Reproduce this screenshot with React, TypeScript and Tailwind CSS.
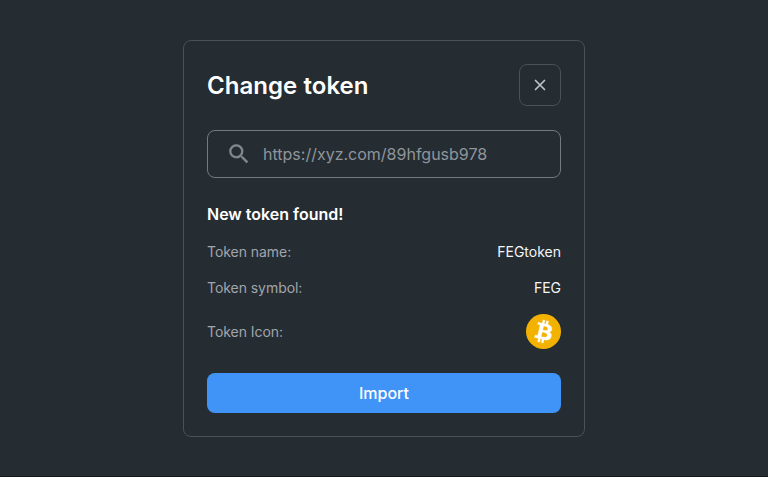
import React from "react";

function Row({ label, value }: { label: string; value: string }) {
  return (
    <div className="flex h-9 items-center justify-between text-[14px]">
      <span className="tracking-[-0.05px] text-[#a0a6ac]">{label}</span>
      <span className="text-[#f4f5f6]">{value}</span>
    </div>
  );
}

export default function App() {
  return (
    <div className="flex h-[477px] w-[768px] items-start justify-center border-b border-[#15191c] bg-[#252c32] pt-10 font-['Inter',sans-serif]">
      <div className="h-[397px] w-[402px] rounded-lg border border-[#4b5156] px-[23px] pt-[23px]">
        <div className="flex h-[42px] items-center justify-between">
          <h1 className="pt-0.5 text-[24px] font-semibold tracking-[0.05px] text-white">Change token</h1>
          <button className="flex size-[42px] items-center justify-center rounded-lg border border-[#4b5156]">
            <svg className="size-[12px]" viewBox="0 0 12 12" stroke="#bfc4c8" strokeWidth="1.7" strokeLinecap="round">
              <path d="M1.5 1.5 10.5 10.5M10.5 1.5 1.5 10.5" />
            </svg>
          </button>
        </div>
        <div className="mt-6 flex h-12 items-center rounded-lg border border-[#737a80] pl-[18px]">
          <svg className="size-[26px]" viewBox="0 0 24 24" fill="#7f8a8f" stroke="#7f8a8f" strokeWidth="0.15">
            <path d="M15.5 14h-.79l-.28-.27A6.471 6.471 0 0 0 16 9.5 6.5 6.5 0 1 0 9.5 16c1.61 0 3.09-.59 4.23-1.57l.27.28v.79l5 4.99L20.49 19l-4.99-5zm-6 0C7.01 14 5 11.99 5 9.5S7.01 5 9.5 5 14 7.01 14 9.5 11.99 14 9.5 14z" />
          </svg>
          <span className="ml-[11px] text-[16px] text-[#8f959b]">https://xyz.com/89hfgusb978</span>
        </div>
        <h2 className="mt-6 text-[16px] leading-6 font-semibold text-white">New token found!</h2>
        <div className="mt-[7px]">
          <Row label="Token name:" value="FEGtoken" />
          <Row label="Token symbol:" value="FEG" />
        </div>
        <div className="mt-[9px] flex h-[35px] items-center justify-between text-[14px]">
          <span className="tracking-[-0.05px] text-[#a0a6ac]">Token Icon:</span>
          <svg className="size-[35px]" viewBox="0 0 32 32">
            <circle cx="16" cy="16" r="16" fill="#f4b200" />
            <path transform="translate(16 16) scale(1.06) translate(-16 -16)" stroke="#fff" strokeWidth="0.3" fill="#fff" d="M23.189 14.02c.314-2.096-1.283-3.223-3.465-3.975l.708-2.84-1.728-.43-.69 2.765c-.454-.114-.92-.22-1.385-.326l.695-2.783L15.596 6l-.708 2.839c-.376-.086-.746-.17-1.104-.26l.002-.009-2.384-.595-.46 1.846s1.283.294 1.256.312c.7.175.826.638.805 1.006l-.806 3.235c.048.012.11.03.18.057l-.183-.045-1.13 4.532c-.086.212-.303.531-.793.41.018.025-1.256-.313-1.256-.313l-.858 1.978 2.25.561c.418.105.828.215 1.231.318l-.715 2.872 1.727.43.708-2.84c.472.127.93.245 1.378.357l-.706 2.828 1.728.43.715-2.866c2.948.558 5.164.333 6.097-2.333.752-2.146-.037-3.385-1.588-4.192 1.13-.26 1.98-1.003 2.207-2.538zm-3.95 5.538c-.533 2.147-4.148.986-5.32.695l.95-3.805c1.172.293 4.929.872 4.37 3.11zm.535-5.569c-.487 1.953-3.495.96-4.47.717l.86-3.45c.975.243 4.118.696 3.61 2.733z" />
          </svg>
        </div>
        <button className="mt-6 flex h-10 w-full items-center justify-center rounded-lg bg-[#4094f7] text-[16px] font-medium text-white">Import</button>
      </div>
    </div>
  );
}
